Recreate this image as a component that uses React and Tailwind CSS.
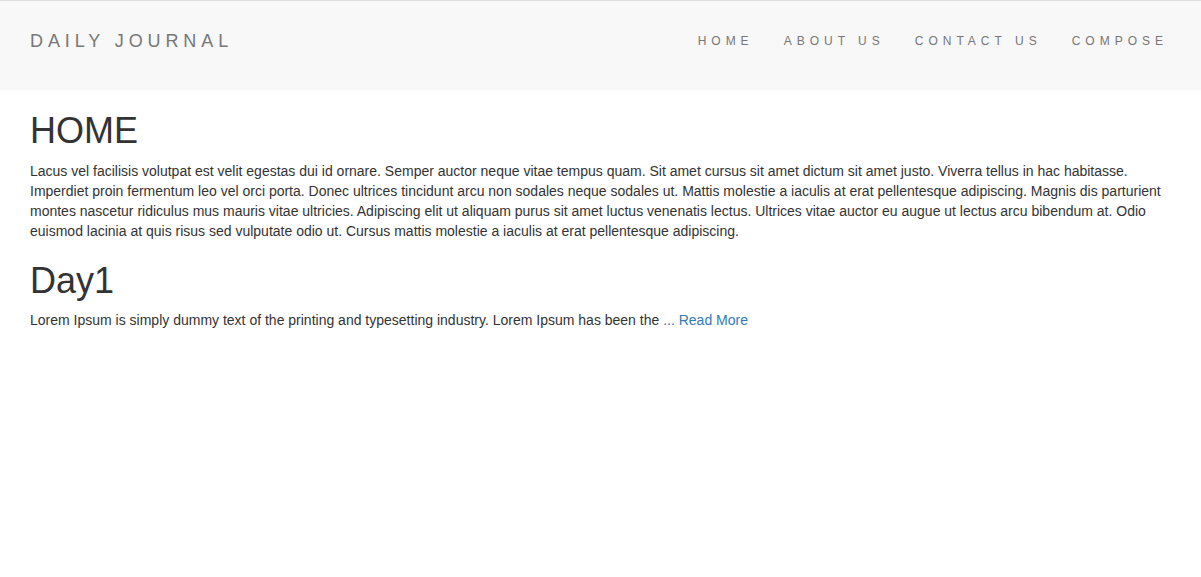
export default function App() {
  const links = ["HOME", "ABOUT US", "CONTACT US", "COMPOSE"];

  return (
    <div className="min-h-screen bg-white text-[#333] text-[14px] leading-[20px] font-['Liberation_Sans',Arial,sans-serif]">
      {/* Navbar */}
      <nav className="h-[90px] bg-[#f8f8f8] border-t border-[#dddddd]">
        <div className="w-[1171px] mx-auto px-[15px] h-full flex items-center justify-between">
          <a href="#" className="text-[18px] tracking-[4.9px] text-[#777] -mt-[10px]">
            DAILY JOURNAL
          </a>
          <ul className="flex items-center -mr-[12px] -mt-[10px]">
            {links.map((l) => (
              <li key={l}>
                <a href="#" className="block px-[15px] text-[12px] tracking-[5px] text-[#777]">
                  {l}
                </a>
              </li>
            ))}
          </ul>
        </div>
      </nav>

      {/* Content */}
      <div className="w-[1171px] mx-auto px-[15px]">
        <h1 className="mt-[21px] mb-[10px] text-[36px] leading-[1.1] font-normal">HOME</h1>
        <p className="mb-[10px]">
          Lacus vel facilisis volutpat est velit egestas dui id ornare. Semper auctor neque vitae tempus quam. Sit amet cursus sit amet dictum sit amet justo. Viverra tellus in hac habitasse. Imperdiet proin fermentum leo vel orci porta. Donec ultrices tincidunt arcu non sodales neque sodales ut. Mattis molestie a iaculis at erat pellentesque adipiscing. Magnis dis parturient montes nascetur ridiculus mus mauris vitae ultricies. Adipiscing elit ut aliquam purus sit amet luctus venenatis lectus. Ultrices vitae auctor eu augue ut lectus arcu bibendum at. Odio euismod lacinia at quis risus sed vulputate odio ut. Cursus mattis molestie a iaculis at erat pellentesque adipiscing.
        </p>

        <h1 className="mt-[20px] mb-[10px] text-[36px] leading-[1.1] font-normal">Day1</h1>
        <p className="mb-[10px]">
          Lorem Ipsum is simply dummy text of the printing and typesetting industry. Lorem Ipsum has been the{" "}
          <a href="#" className="text-[#337ab7]">... Read More</a>
        </p>
      </div>
    </div>
  );
}
